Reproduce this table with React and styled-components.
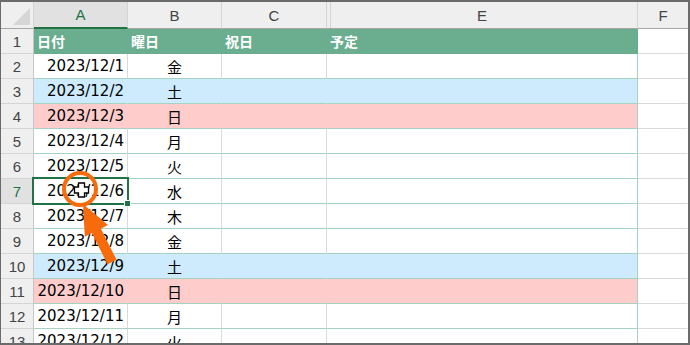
import React from 'react';
import styled, { createGlobalStyle } from 'styled-components';

const GlobalStyle = createGlobalStyle`
    body {
        margin: 0;
        background: #ffffff;
    }
`;

const Frame = styled.div`
    position: relative;
    width: 690px;
    height: 345px;
    box-sizing: border-box;
    border-style: solid;
    border-color: #6b6b6b;
    border-width: 2px 2px 2px 1px;
    overflow: hidden;
    background: #ffffff;
`;

const Sheet = styled.div`
    display: grid;
    grid-template-columns: 33px 94px 94px 105px 311px 50px;
    grid-template-rows: 27px;
    grid-auto-rows: 25px;
`;

const Corner = styled.div`
    position: relative;
    background: #efefef;
    border-right: 1px solid #d4d4d4;
    border-bottom: 1px solid #a6a6a6;
    box-sizing: border-box;

    &::after {
        content: '';
        position: absolute;
        right: 3px;
        bottom: 3px;
        border-style: solid;
        border-width: 0 0 17px 17px;
        border-color: transparent transparent #d6d6d6 transparent;
    }
`;

const ColHead = styled.div`
    display: flex;
    align-items: center;
    justify-content: center;
    box-sizing: border-box;
    background: ${p => (p.$active ? '#e1e1e1' : '#efefef')};
    color: ${p => (p.$active ? '#217346' : '#444444')};
    border-right: ${p => (p.$last ? 'none' : '1px solid #d4d4d4')};
    border-bottom: ${p => (p.$active ? '2px solid #217346' : '1px solid #a6a6a6')};
    box-shadow: ${p => (p.$afterHidden ? 'inset 3px 0 0 #efefef, inset 4px 0 0 #d4d4d4' : 'none')};
    font-family: "Liberation Sans", Arial, sans-serif;
    font-size: 15px;
`;

const RowHead = styled.div`
    display: flex;
    align-items: center;
    justify-content: center;
    box-sizing: border-box;
    background: ${p => (p.$active ? '#e1e1e1' : '#efefef')};
    color: ${p => (p.$active ? '#217346' : '#444444')};
    border-right: 1px solid ${p => (p.$active ? '#217346' : '#c6c6c6')};
    border-bottom: 1px solid #d4d4d4;
    font-family: "Liberation Sans", Arial, sans-serif;
    font-size: 15px;
`;

const tones = {
    title: { bg: '#6aad8f', line: '#6aad8f', bottom: '#6aad8f' },
    white: { bg: '#ffffff', line: '#dadada', bottom: '#a6d3c1' },
    blue: { bg: '#cdebfd', line: '#cdebfd', bottom: '#a6d3c1' },
    pink: { bg: '#ffcccc', line: '#ffcccc', bottom: '#a6d3c1' },
    outside: { bg: '#ffffff', line: 'transparent', bottom: '#dadada' },
};

const Cell = styled.div`
    position: relative;
    display: flex;
    align-items: center;
    justify-content: ${p => (p.$align === 'right' ? 'flex-end' : p.$align === 'center' ? 'center' : 'flex-start')};
    padding: 0 3px 0 3px;
    box-sizing: border-box;
    background: ${p => tones[p.$tone].bg};
    border-right: 1px solid ${p => (p.$edge ? '#a6d3c1' : tones[p.$tone].line)};
    border-bottom: 1px solid ${p => tones[p.$tone].bottom};
    color: ${p => (p.$tone === 'title' ? '#ffffff' : '#000000')};
    font-family: ${p => (p.$kind === 'date' ? '"DejaVu Sans", sans-serif' : '"Noto Sans CJK JP", sans-serif')};
    font-weight: ${p => (p.$tone === 'title' ? 700 : 400)};
    font-size: ${p => (p.$tone === 'title' ? '14px' : '15px')};
    white-space: nowrap;
`;

const Selection = styled.div`
    position: absolute;
    z-index: 2;
    left: -2px;
    top: -2px;
    right: -2px;
    bottom: -2px;
    border: 2px solid #217346;
    pointer-events: none;

    &::after {
        content: '';
        position: absolute;
        right: -4px;
        bottom: -4px;
        width: 5px;
        height: 5px;
        background: #217346;
        border: 1px solid #ffffff;
    }
`;

const Overlay = styled.svg`
    position: absolute;
    z-index: 3;
    left: -1px;
    top: -2px;
    pointer-events: none;
`;

const columns = ['A', 'B', 'C', 'E', 'F'];

const rows = [
    { date: '2023/12/1', day: '金', tone: 'white' },
    { date: '2023/12/2', day: '土', tone: 'blue' },
    { date: '2023/12/3', day: '日', tone: 'pink' },
    { date: '2023/12/4', day: '月', tone: 'white' },
    { date: '2023/12/5', day: '火', tone: 'white' },
    { date: '2023/12/6', day: '水', tone: 'white', selected: true },
    { date: '2023/12/7', day: '木', tone: 'white' },
    { date: '2023/12/8', day: '金', tone: 'white' },
    { date: '2023/12/9', day: '土', tone: 'blue' },
    { date: '2023/12/10', day: '日', tone: 'pink' },
    { date: '2023/12/11', day: '月', tone: 'white' },
    { date: '2023/12/12', day: '火', tone: 'white' },
];

function Annotation() {
    const orange = '#f86b0c';
    return (
        <Overlay width="690" height="345" viewBox="0 0 690 345">
            <polygon
                points="74.5,187 78.5,187 78.5,183 84.5,183 84.5,187 88.5,187 88.5,193 84.5,193 84.5,197 78.5,197 78.5,193 74.5,193"
                fill="#ffffff"
                stroke="#000000"
                strokeWidth="1.3"
            />
            <circle cx="80" cy="189" r="16" fill="none" stroke={orange} strokeWidth="4" />
            <polygon
                points="83,204 108,225 100.9,228.7 116.5,259.8 107.5,264.2 91.9,233.1 84.8,236.7"
                fill={orange}
            />
        </Overlay>
    );
}

export default function App() {
    return (
        <>
            <GlobalStyle />
            <Frame>
                <Sheet>
                    <Corner />
                    {columns.map(c => (
                        <ColHead key={c} $active={c === 'A'} $afterHidden={c === 'E'} $last={c === 'F'}>
                            {c}
                        </ColHead>
                    ))}

                    <RowHead>1</RowHead>
                    <Cell $tone="title">日付</Cell>
                    <Cell $tone="title">曜日</Cell>
                    <Cell $tone="title">祝日</Cell>
                    <Cell $tone="title">予定</Cell>
                    <Cell $tone="outside" />

                    {rows.map((r, i) => (
                        <React.Fragment key={r.date}>
                            <RowHead $active={r.selected}>{i + 2}</RowHead>
                            <Cell $tone={r.tone} $kind="date" $align="right">
                                {r.date}
                                {r.selected && <Selection />}
                            </Cell>
                            <Cell $tone={r.tone} $align="center">{r.day}</Cell>
                            <Cell $tone={r.tone} />
                            <Cell $tone={r.tone} $edge />
                            <Cell $tone="outside" />
                        </React.Fragment>
                    ))}
                </Sheet>
                <Annotation />
            </Frame>
        </>
    );
}
